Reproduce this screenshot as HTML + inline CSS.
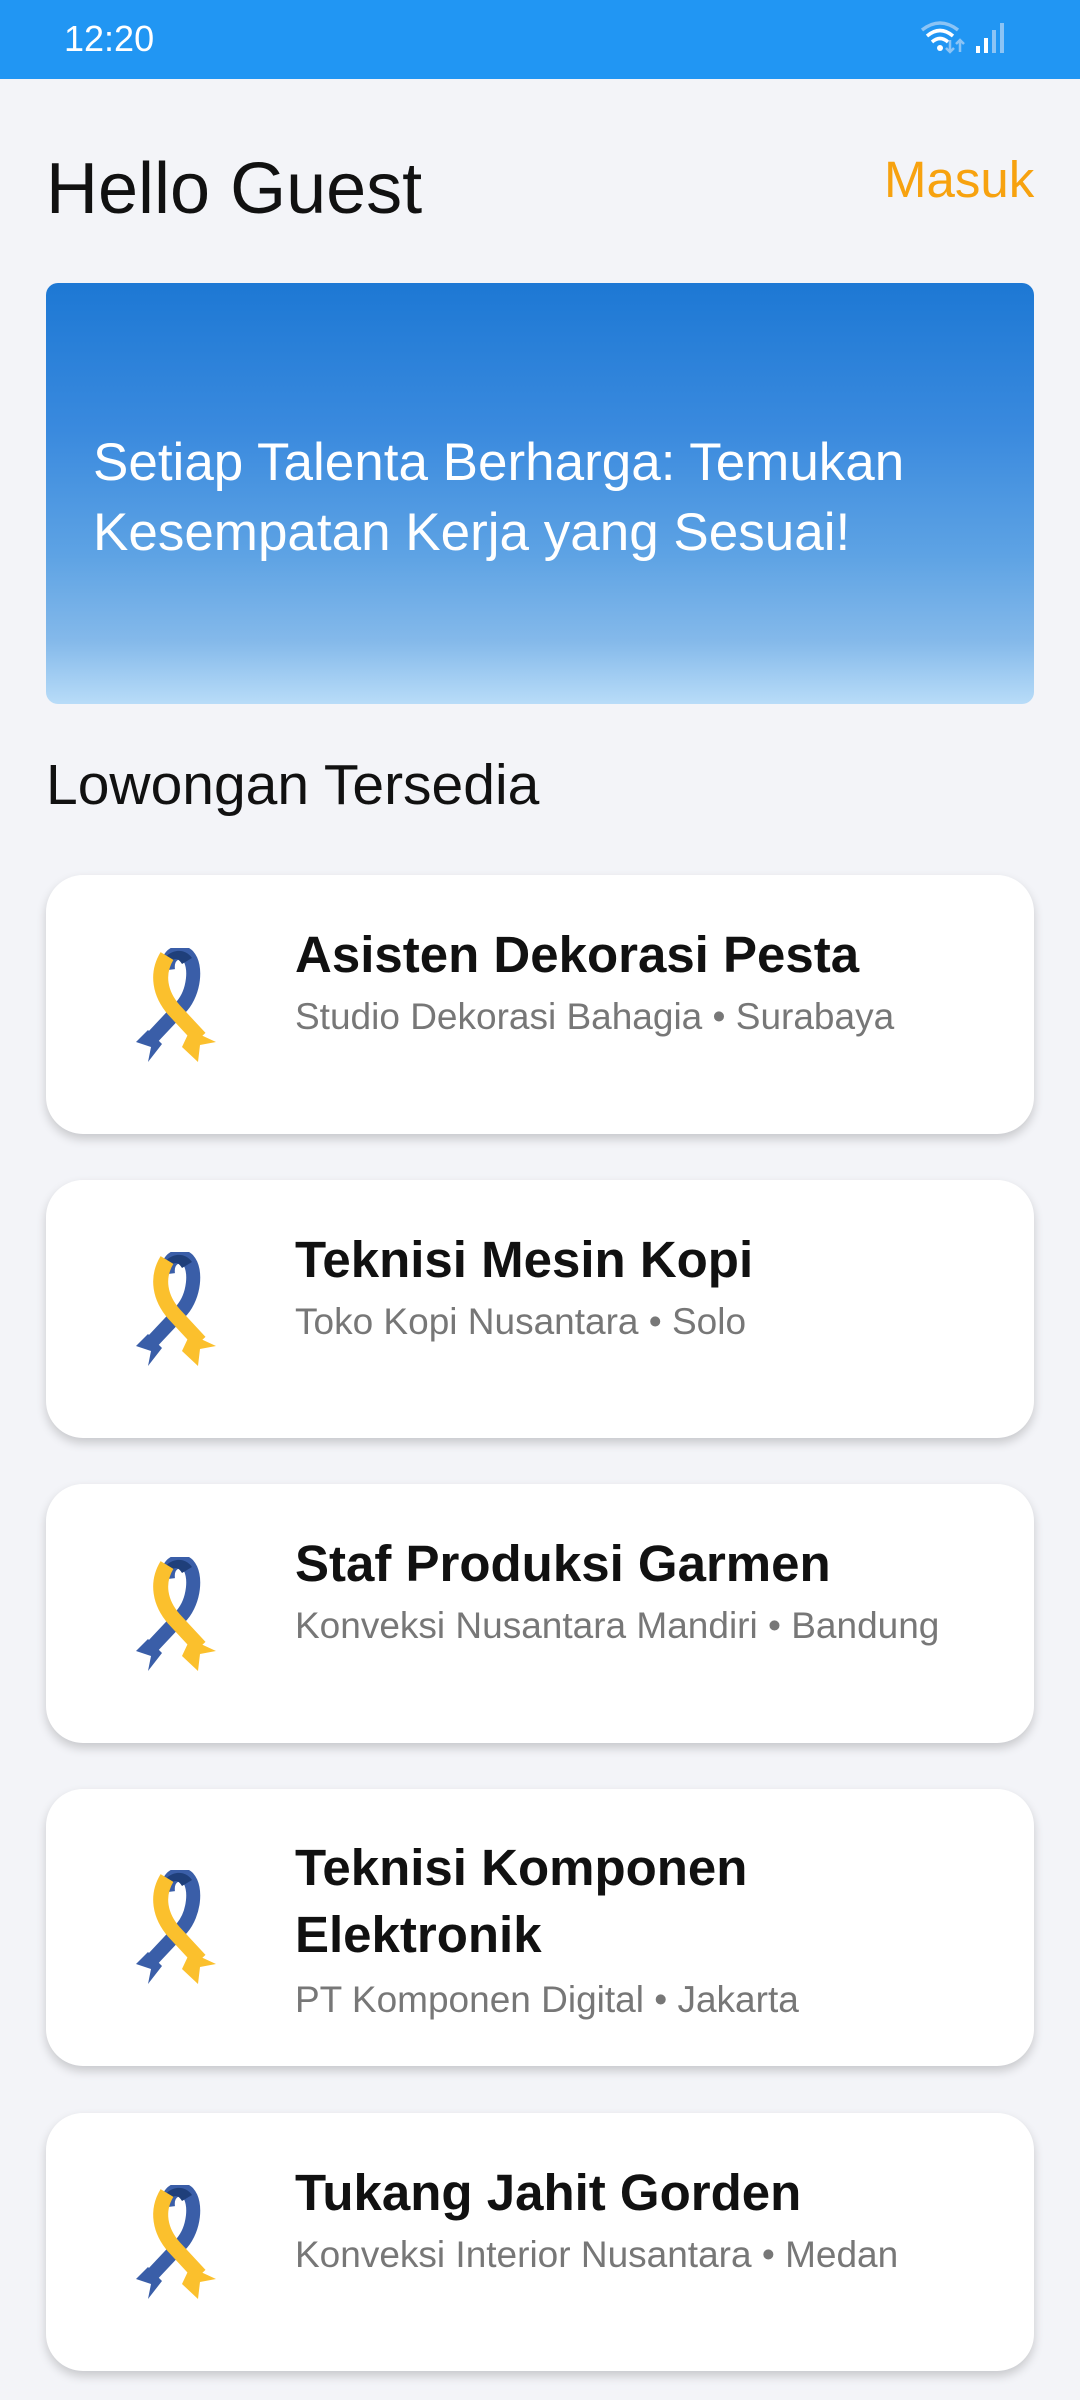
<!DOCTYPE html>
<html><head><meta charset="utf-8"><style>
*{margin:0;padding:0;box-sizing:border-box}
body{width:1080px;height:2400px;background:#f3f4f8;font-family:"Liberation Sans",sans-serif;position:relative;overflow:hidden}
.sb{position:absolute;left:0;top:0;width:1080px;height:79px;background:#2196f3}
.time{position:absolute;left:64px;top:18px;color:#fff;font-size:36px}
.abs{position:absolute}
.banner{left:46px;top:283px;width:988px;height:421px;border-radius:12px;background:linear-gradient(180deg,#1d78d4 0%,#3a8ade 35%,#5ea3e4 65%,#84b9ea 85%,#b8dcf8 100%)}
.btext{left:93px;top:428px;color:#fff;font-size:53px;line-height:70px}
.card{position:absolute;left:46px;width:988px;background:#fff;border-radius:37px;box-shadow:0 5px 10px rgba(0,0,0,.18)}
.card svg{position:absolute;left:90px;width:80px;height:115px}
.t{position:absolute;left:249px;font-weight:bold;font-size:51px;color:#111;line-height:67px}
.s{position:absolute;left:249px;font-size:37px;color:#777}
</style></head><body>
<div class="sb"><div class="time">12:20</div>
<svg class="abs" style="left:920px;top:20px" width="90" height="36" viewBox="0 0 90 36">
<path d="M2 10 Q20 -4 38 10" stroke="#8cc4f5" stroke-width="3.5" fill="none"/>
<path d="M7 16 Q20 5 33 16" stroke="#fff" stroke-width="3.5" fill="none"/>
<path d="M12 22 Q20 15 28 22" stroke="#fff" stroke-width="3.5" fill="none"/>
<circle cx="20" cy="28" r="3" fill="#fff"/>
<path d="M30 20v12M26 28l4 4 4-4M40 32V20M36 24l4-4 4 4" stroke="#8cc4f5" stroke-width="2.5" fill="none"/>
<rect x="56" y="26" width="4" height="7" fill="#fff"/><rect x="64" y="18" width="4" height="15" fill="#fff"/>
<rect x="72" y="10" width="4" height="23" fill="#8cc4f5"/><rect x="80" y="3" width="4" height="30" fill="#8cc4f5"/></svg></div>
<div class="abs" style="left:46px;top:148px;font-size:72px;color:#111">Hello Guest</div>
<div class="abs" style="left:884px;top:150px;font-size:51px;color:#f7a20f">Masuk</div>
<div class="abs banner"></div>
<div class="abs btext">Setiap Talenta Berharga: Temukan<br>Kesempatan Kerja yang Sesuai!</div>
<div class="abs" style="left:46px;top:752px;font-size:57px;color:#111">Lowongan Tersedia</div>

<svg width="0" height="0" style="position:absolute"><defs><g id="rb">
<path d="M32 22 C30 6 44 0 52 8 C61 18 58 44 46 58 L14 92" stroke="#3a5ea8" stroke-width="14" fill="none"/>
<path d="M26 16 C30 2 48 -2 56 10 L46 16 C42 9 36 9 34 18 Z" fill="#1f3f7a"/>
<polygon points="0,94 12,82 26,96 12,114 15,99" fill="#3a5ea8"/>
<path d="M31 8 C20 26 24 46 38 62 L64 90" stroke="#fbc02d" stroke-width="15" fill="none"/>
<polygon points="54,82 80,94 64,97 62,114 46,99" fill="#fbc02d"/>
</g></defs></svg>

<div class="card" style="top:875px;height:259px"><svg style="top:73px" viewBox="0 0 80 115"><use href="#rb"/></svg>
<div class="t" style="top:46px">Asisten Dekorasi Pesta</div><div class="s" style="top:121px">Studio Dekorasi Bahagia • Surabaya</div></div>
<div class="card" style="top:1180px;height:258px"><svg style="top:72px" viewBox="0 0 80 115"><use href="#rb"/></svg>
<div class="t" style="top:46px">Teknisi Mesin Kopi</div><div class="s" style="top:121px">Toko Kopi Nusantara • Solo</div></div>
<div class="card" style="top:1484px;height:259px"><svg style="top:73px" viewBox="0 0 80 115"><use href="#rb"/></svg>
<div class="t" style="top:46px">Staf Produksi Garmen</div><div class="s" style="top:121px">Konveksi Nusantara Mandiri • Bandung</div></div>
<div class="card" style="top:1789px;height:277px"><svg style="top:81px" viewBox="0 0 80 115"><use href="#rb"/></svg>
<div class="t" style="top:45px">Teknisi Komponen<br>Elektronik</div><div class="s" style="top:190px">PT Komponen Digital • Jakarta</div></div>
<div class="card" style="top:2113px;height:258px"><svg style="top:72px" viewBox="0 0 80 115"><use href="#rb"/></svg>
<div class="t" style="top:46px">Tukang Jahit Gorden</div><div class="s" style="top:121px">Konveksi Interior Nusantara • Medan</div></div>
</body></html>
